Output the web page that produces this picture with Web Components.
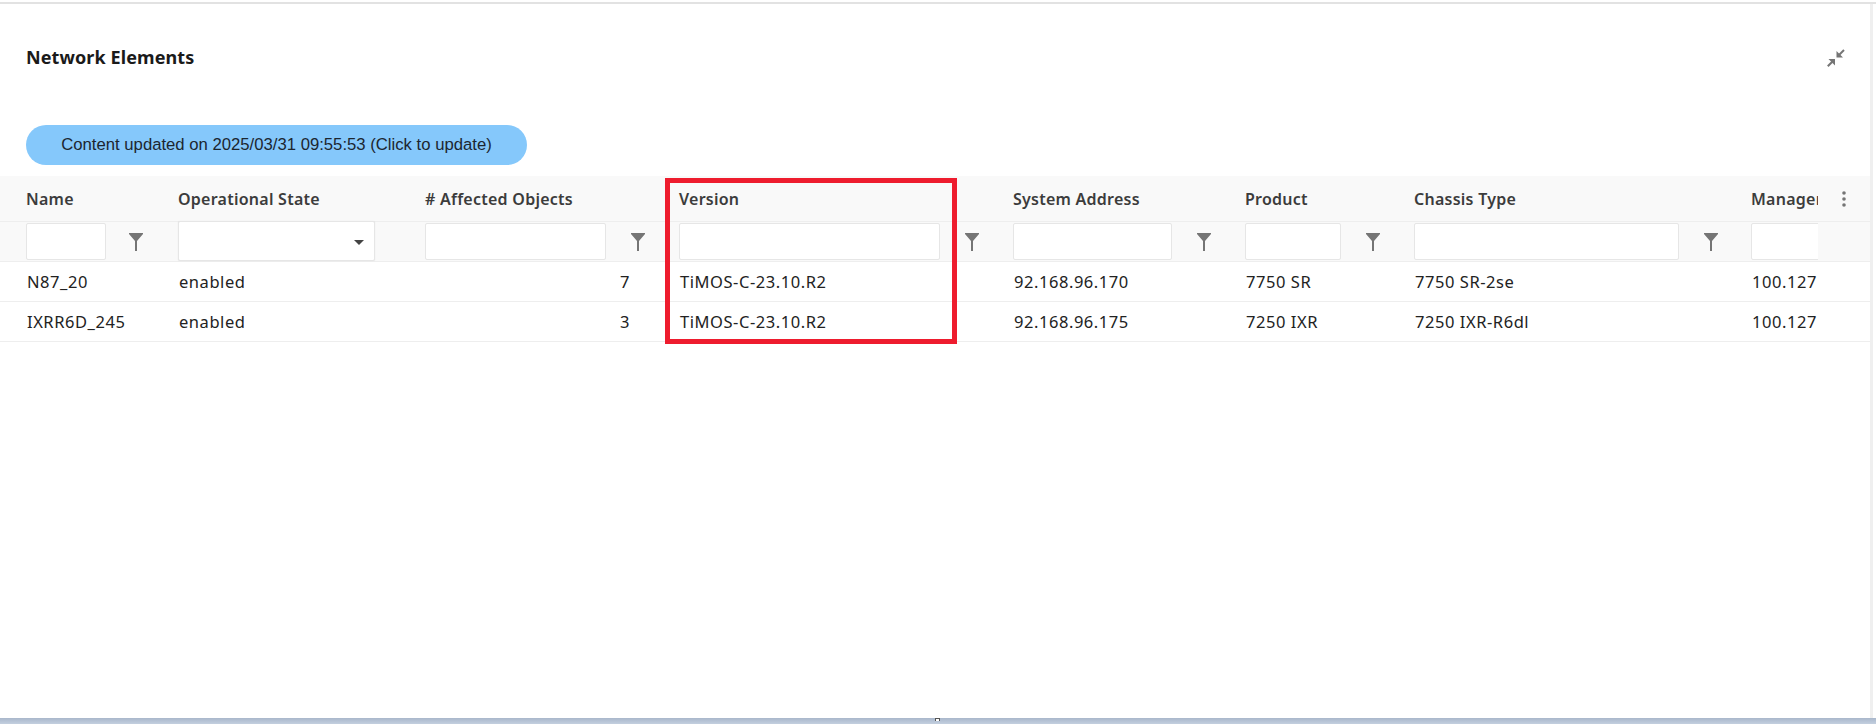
<!DOCTYPE html>
<html>
<head>
<meta charset="utf-8">
<title>Network Elements</title>
<style>
html,body{margin:0;padding:0;background:#fff;}
body{font-family:"Noto Sans",sans-serif;}
</style>
</head>
<body>
<ne-page>
  <ne-panel heading="Network Elements">
    <ne-update-pill>Content updated on 2025/03/31 09:55:53 (Click to update)</ne-update-pill>
    <ne-table></ne-table>
  </ne-panel>
</ne-page>
<script>
// page frame: top line, content, right strip and the bottom splitter
class NePage extends HTMLElement{
    constructor(){
        super();
        this.attachShadow({mode:'open'});
        this.shadowRoot.innerHTML = `
        <style>
        :host{display:flex;flex-direction:column;width:1876px;height:724px;overflow:hidden;}
        .line{height:2px;margin-top:2px;background:#e2e2e2;flex:none;}
        .main{flex:1;display:flex;min-height:0;}
        .content{width:1870px;flex:none;}
        .strip{width:3px;background:#efefef;flex:none;}
        .split{height:6px;flex:none;position:relative;background:linear-gradient(#a9b7cb,#c3cfdf);}
        .split i{position:absolute;left:935px;top:0;width:3px;height:2px;border:1px solid #555;border-bottom-width:0;background:#fff;}
        </style>
        <div class="line"></div>
        <div class="main"><div class="content"><slot></slot></div><div class="strip"></div></div>
        <div class="split"><i></i></div>`;
    }
}

class NePanel extends HTMLElement{
    constructor(){
        super();
        this.attachShadow({mode:'open'});
    }
    connectedCallback(){
        this.shadowRoot.innerHTML = `
        <style>
        :host{display:block;}
        header{display:flex;justify-content:space-between;align-items:center;height:106px;padding:0 26px;box-sizing:border-box;}
        h2{margin:0;font:700 18px "Noto Sans",sans-serif;letter-spacing:.1px;color:#1a1a1a;}
        svg{display:block;margin-right:-1px;position:relative;top:1px;}
        .body{padding-top:15px;}
        </style>
        <header>
          <h2>${this.getAttribute('heading')}</h2>
          <svg width="18" height="18" viewBox="0 0 18 18" fill="#757575" stroke="none">
            <path d="M9.500 8.500V2L16 8.500Z"/>
            <path d="M11 7 17 1" stroke="#757575" stroke-width="2"/>
            <path d="M8 10H1.500L8 16.500Z"/>
            <path d="M6.500 11.500 .8 17.200" stroke="#757575" stroke-width="2"/>
          </svg>
        </header>
        <div class="body"><slot></slot></div>`;
    }
}

class NeUpdatePill extends HTMLElement{
    constructor(){
        super();
        this.attachShadow({mode:'open'});
        this.shadowRoot.innerHTML = `
        <style>
        :host{display:flex;align-items:center;justify-content:center;box-sizing:border-box;width:501px;height:40px;margin:0 0 11px 26px;
          border-radius:20px;background:#85c8fb;color:#1c2630;font:16.700px "Liberation Sans",Arial,sans-serif;cursor:pointer;}
        </style>
        <slot></slot>`;
    }
}

class NeFilterIcon extends HTMLElement{
    constructor(){
        super();
        this.attachShadow({mode:'open'});
        this.shadowRoot.innerHTML = `
        <style>:host{display:block;width:14px;height:18px;}svg{display:block;}</style>
        <svg width="14" height="18" viewBox="0 0 14 18" fill="#757575"><path d="M0 0H14V1L8 8V18H6V8L0 1Z"/></svg>`;
    }
}

// one filter box of the second header row; select="" gives it the dropdown arrow
class NeFilter extends HTMLElement{
    constructor(){
        super();
        this.attachShadow({mode:'open'});
    }
    connectedCallback(){
        let isSelect = this.hasAttribute('select');
        this.shadowRoot.innerHTML = `
        <style>
        :host{display:block;box-sizing:border-box;height:37px;background:#fff;border:1px solid #e6e6e6;border-radius:2px;position:relative;}
        :host([select]){height:40px;margin-top:-2px;box-shadow:0 0 1px #ddd;}
        i{position:absolute;right:10px;top:18px;border:5px solid transparent;border-top:5px solid #444;border-bottom:0;}
        </style>
        ${isSelect ? '<i></i>' : ''}`;
    }
}

const COLUMNS = [
    {name:'Name', width:152, input:80, filter:109},
    {name:'Operational State', width:247, input:197, select:true},
    {name:'# Affected Objects', width:254, input:181, filter:212, right:204},
    {name:'Version', width:334, input:261, filter:292},
    {name:'System Address', width:232, input:159, filter:190},
    {name:'Product', width:169, input:96, filter:127},
    {name:'Chassis Type', width:337, input:265, filter:296},
    {name:'Manager', width:120, input:120}
];

const ROWS = [
    ['N87_20','enabled','7','TiMOS-C-23.10.R2','92.168.96.170','7750 SR','7750 SR-2se','100.127'],
    ['IXRR6D_245','enabled','3','TiMOS-C-23.10.R2','92.168.96.175','7250 IXR','7250 IXR-R6dl','100.127']
];

class NeTable extends HTMLElement{
    constructor(){
        super();
        this.attachShadow({mode:'open'});
    }
    connectedCallback(){
        this.render();
    }
    render(){
        let heads = COLUMNS.map(c => `<div class="cell head" style="width:${c.width}px">${c.name}</div>`).join('');
        let filters = COLUMNS.map(c => `
            <div class="cell fcell" style="width:${c.width}px">
              <ne-filter ${c.select ? 'select' : ''} style="width:${c.input}px"></ne-filter>
              ${c.filter ? `<ne-filter-icon style="left:${c.filter - 6}px"></ne-filter-icon>` : ''}
            </div>`).join('');
        let rows = ROWS.map(r => `<div class="row data">` + r.map((v, i) => {
            let c = COLUMNS[i];
            let inner = c.right ? `<span style="display:block;width:${c.right}px;text-align:right">${v}</span>` : v;
            return `<div class="cell val" style="width:${c.width}px">${inner}</div>`;
        }).join('') + `</div>`).join('');
        this.shadowRoot.innerHTML = `
        <style>
        :host{display:flex;position:relative;width:1870px;}
        .scroll{width:1818px;flex:none;overflow:hidden;}
        .rows{width:max-content;}
        .row{display:flex;padding-left:26px;}
        .row.h1{height:46px;background:#f9f9f9;border-bottom:1px solid #eee;box-sizing:border-box;}
        .row.h2{height:40px;background:#f9f9f9;border-bottom:1px solid #eee;box-sizing:border-box;padding-top:1px;}
        .row.data{height:40px;border-bottom:1px solid #eee;box-sizing:border-box;}
        .cell{box-sizing:border-box;flex:none;position:relative;white-space:nowrap;}
        .head{font:600 16px/47px "Noto Sans",sans-serif;letter-spacing:.25px;color:#3c3c3c;}
        .val{font:400 16.500px/39px "Noto Sans",sans-serif;letter-spacing:.55px;color:#222;padding-left:1px;}
        ne-filter-icon{position:absolute;top:10px;}
        .side{flex:1;}
        .side div{box-sizing:border-box;}
        .s1{height:46px;background:#f9f9f9;border-bottom:1px solid #eee;position:relative;}
        .s2{height:40px;background:#f9f9f9;border-bottom:1px solid #eee;}
        .s3{height:40px;border-bottom:1px solid #eee;}
        .s1 svg{position:absolute;left:24px;top:15px;}
        .mark{position:absolute;left:665px;top:2px;width:292px;height:166px;box-sizing:border-box;border:5px solid #ee1c2e;pointer-events:none;}
        </style>
        <div class="scroll"><div class="rows">
          <div class="row h1">${heads}</div>
          <div class="row h2">${filters}</div>
          ${rows}
        </div></div>
        <div class="side">
          <div class="s1"><svg width="4" height="16" viewBox="0 0 4 16" fill="#757575"><circle cx="2" cy="2" r="1.800"/><circle cx="2" cy="8" r="1.800"/><circle cx="2" cy="14" r="1.800"/></svg></div>
          <div class="s2"></div><div class="s3"></div><div class="s3"></div>
        </div>
        <div class="mark"></div>`;
    }
}

customElements.define('ne-page',NePage);
customElements.define('ne-panel',NePanel);
customElements.define('ne-update-pill',NeUpdatePill);
customElements.define('ne-filter-icon',NeFilterIcon);
customElements.define('ne-filter',NeFilter);
customElements.define('ne-table',NeTable);
</script>
</body>
</html>
